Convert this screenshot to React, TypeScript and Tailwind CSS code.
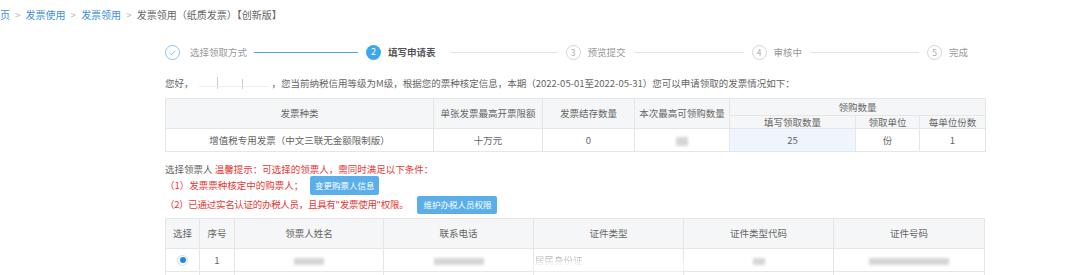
const font = { fontFamily: '"Noto Sans CJK SC", "Noto Sans", sans-serif' };

const steps = [
  { n: 2, label: "填写申请表", state: "active", line: 108 },
  { n: 3, label: "预览提交", state: "todo", line: 110 },
  { n: 4, label: "审核中", state: "todo", line: 109 },
  { n: 5, label: "完成", state: "todo", line: 0 },
];

function Blur({ w, h = 8, className = "" }: { w: number; h?: number; className?: string }) {
  return (
    <span
      className={"inline-block bg-[#d6d6d6] blur-[1.5px] align-middle " + className}
      style={{ width: w, height: h }}
    />
  );
}

function Steps() {
  return (
    <div className="flex h-[30px] items-center">
      <div className="flex items-center">
        <span className="flex h-[15px] w-[15px] items-center justify-center rounded-full border border-[#8cc4ee]">
          <svg viewBox="0 0 12 12" className="h-[9px] w-[9px]" fill="none" stroke="#7bbbea" strokeWidth="1.2">
            <path d="M2 6.3l2.6 2.6L10 3.4" />
          </svg>
        </span>
        <span className="ml-[10px] text-[9.5px] text-[#999]">选择领取方式</span>
        <span className="mx-[7px] h-px w-[104px] bg-[#4aa6e6]" />
      </div>
      {steps.map((s, i) => (
        <div key={s.n} className="flex items-center">
          <span
            className={
              s.state === "active"
                ? "ml-[1px] flex h-[15px] w-[15px] items-center justify-center rounded-full bg-[#3ea6ec] text-[9px] text-white"
                : "flex h-[15px] w-[15px] items-center justify-center rounded-full border border-[#d4d4d4] text-[8.5px] text-[#aaa]"
            }
          >
            {s.n}
          </span>
          <span
            className={
              s.state === "active"
                ? "ml-[7px] text-[9.5px] font-bold text-[#555]"
                : "ml-[7px] text-[9.5px] text-[#999]"
            }
          >
            {s.label}
          </span>
          {s.line > 0 && (
            <span
              className={"h-px bg-[#e2e2e2] " + (i === 0 ? "ml-[14px] mr-[8px]" : "mx-[8px]")}
              style={{ width: s.line }}
            />
          )}
        </div>
      ))}
    </div>
  );
}

const th = "border border-[#e6e6e6] bg-[#f5f6f7] font-normal text-[#666]";
const td = "border border-[#e6e6e6] text-[#666]";

function QuotaTable() {
  return (
    <table className="w-[820px] table-fixed border-collapse text-center text-[9.5px]">
      <colgroup>
        <col className="w-[268px]" />
        <col className="w-[109px]" />
        <col className="w-[92px]" />
        <col className="w-[95px]" />
        <col className="w-[126px]" />
        <col className="w-[64px]" />
        <col className="w-[66px]" />
      </colgroup>
      <thead>
        <tr className="h-[17px]">
          <th rowSpan={2} className={th}>发票种类</th>
          <th rowSpan={2} className={th}>单张发票最高开票限额</th>
          <th rowSpan={2} className={th}>发票结存数量</th>
          <th rowSpan={2} className={th}>本次最高可领购数量</th>
          <th colSpan={3} className={th}>领购数量</th>
        </tr>
        <tr className="h-[13px]">
          <th className={th + " leading-[12px]"}>填写领取数量</th>
          <th className={th + " leading-[12px]"}>领取单位</th>
          <th className={th + " leading-[12px]"}>每单位份数</th>
        </tr>
      </thead>
      <tbody>
        <tr className="h-[23px]">
          <td className={td}>增值税专用发票（中文三联无金额限制版）</td>
          <td className={td}>十万元</td>
          <td className={td}>0</td>
          <td className={td}>
            <Blur w={12} h={9} />
          </td>
          <td className={td + " bg-[#eef5fc]"}>25</td>
          <td className={td}>份</td>
          <td className={td}>1</td>
        </tr>
      </tbody>
    </table>
  );
}

function PersonTable() {
  return (
    <table className="w-[819px] table-fixed border-collapse text-center text-[9.5px]">
      <colgroup>
        <col className="w-[34px]" />
        <col className="w-[35px]" />
        <col className="w-[149px]" />
        <col className="w-[150px]" />
        <col className="w-[150px]" />
        <col className="w-[150px]" />
        <col className="w-[151px]" />
      </colgroup>
      <thead>
        <tr className="h-[30px]">
          <th className={th}>选择</th>
          <th className={th}>序号</th>
          <th className={th}>领票人姓名</th>
          <th className={th}>联系电话</th>
          <th className={th}>证件类型</th>
          <th className={th}>证件类型代码</th>
          <th className={th}>证件号码</th>
        </tr>
      </thead>
      <tbody>
        <tr className="h-[23px]">
          <td className={td}>
            <span className="mx-auto flex h-[11px] w-[11px] items-center justify-center rounded-full border border-[#c9ddf0] bg-white">
              <span className="h-[6px] w-[6px] rounded-full bg-[#1e88e5]" />
            </span>
          </td>
          <td className={td}>1</td>
          <td className={td}>
            <Blur w={30} h={7} />
          </td>
          <td className={td}>
            <Blur w={50} h={7} />
          </td>
          <td className={td + " relative text-left"}>
            <span className="pl-[1px] text-[#999] opacity-70">居民身份证</span>
            <span className="absolute bottom-0 left-0 h-[10px] w-[150px] bg-white/80 blur-[2px]" />
          </td>
          <td className={td}>
            <Blur w={12} h={7} />
          </td>
          <td className={td}>
            <Blur w={80} h={7} />
          </td>
        </tr>
        <tr className="h-[23px]">
          <td className={td} />
          <td className={td} />
          <td className={td} />
          <td className={td} />
          <td className={td} />
          <td className={td} />
          <td className={td} />
        </tr>
      </tbody>
    </table>
  );
}

export default function App() {
  return (
    <div className="h-[275px] w-[1080px] overflow-hidden bg-white" style={font}>
      {/* breadcrumb */}
      <div className="flex h-[30px] items-center pb-[1px] text-[10px]">
        <span className="text-[#3d8fd8]">页</span>
        <span className="mx-[5px] text-[#bbb]">&gt;</span>
        <span className="text-[#3d8fd8]">发票使用</span>
        <span className="mx-[5px] text-[#bbb]">&gt;</span>
        <span className="text-[#3d8fd8]">发票领用</span>
        <span className="mx-[5px] text-[#bbb]">&gt;</span>
        <span className="text-[#666]">发票领用（纸质发票）【创新版】</span>
      </div>

      <div className="ml-[165px] w-[820px]">
        <div className="mt-[7px]">
          <Steps />
        </div>

        <div className="mt-[4px] flex h-[24px] items-center text-[9.5px] text-[#666]">
          <span>您好，</span>
          <span className="relative mx-[1px] inline-block h-[14px] w-[76px]">
            <span className="absolute left-[22px] top-[1px] h-[12px] w-px bg-[#ccc] blur-[0.6px]" />
            <span className="absolute left-[47px] top-[3px] h-[10px] w-px bg-[#ccc] blur-[0.6px]" />
            <span className="absolute bottom-[3px] left-[4px] h-px w-[70px] bg-[#eee]" />
          </span>
          <span>，您当前纳税信用等级为M级，根据您的票种核定信息，本期（2022-05-01至2022-05-31）您可以申请领取的发票情况如下：</span>
        </div>

        <div className="mt-[3px]">
          <QuotaTable />
        </div>

        <div className="mt-[10px] text-[9.5px]">
          <div className="flex h-[14px] items-center">
            <span className="text-[#666]">选择领票人&nbsp;</span>
            <span className="text-[#e53935]">温馨提示：可选择的领票人，需同时满足以下条件：</span>
          </div>
          <div className="flex h-[19px] items-center text-[#e53935]">
            <span>（1）发票票种核定中的购票人；</span>
            <span className="ml-[7px] flex h-[19px] w-[69px] items-center justify-center rounded-[2px] bg-[#5aaeea] text-[8.5px] text-white">
              变更购票人信息
            </span>
          </div>
          <div className="flex h-[19px] items-center text-[#e53935]">
            <span className="tracking-[-0.3px]">（2）已通过实名认证的办税人员，且具有"发票使用"权限。</span>
            <span className="ml-[9px] flex h-[18px] w-[80px] items-center justify-center rounded-[2px] bg-[#5aaeea] text-[8.5px] text-white">
              维护办税人员权限
            </span>
          </div>
        </div>

        <div className="mt-[4px]">
          <PersonTable />
        </div>
      </div>
    </div>
  );
}
